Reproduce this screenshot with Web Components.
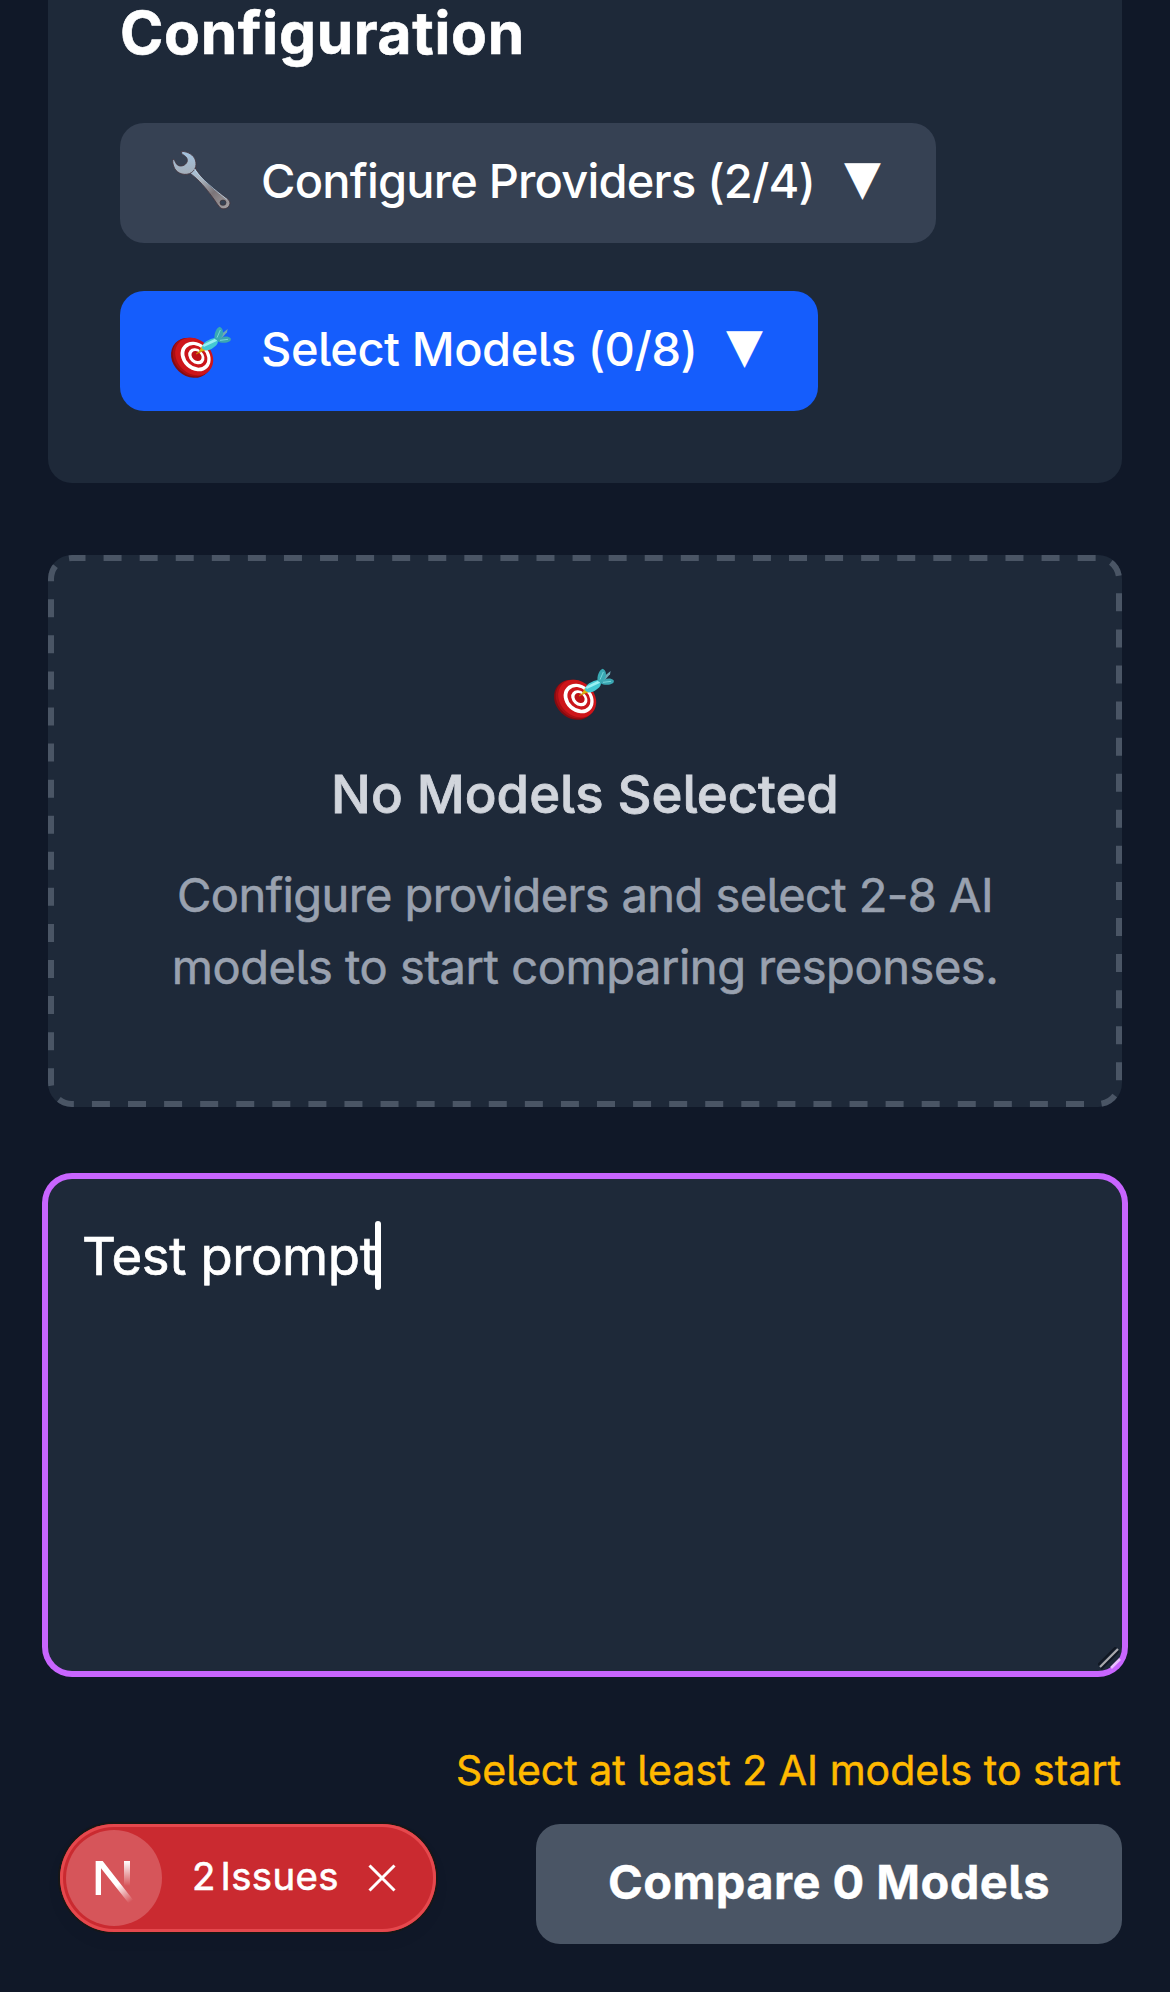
<!DOCTYPE html>
<html lang="en"><head><meta charset="utf-8"><title>Model comparison</title>
<style>
html,body{margin:0;height:1992px;overflow:hidden;background:#101828}
body{font-family:Inter,"Liberation Sans",sans-serif;font-feature-settings:"cv05";color:#fff}
</style></head><body>
<compare-app></compare-app>
<script>
const define=(name,html)=>customElements.define(name,class extends HTMLElement{
  constructor(){super();this.attachShadow({mode:'open'}).innerHTML=html;}
});

define('wrench-icon',`<style>:host{display:block;width:60px;height:60px}svg{display:block;overflow:visible}</style>
<svg width="60" height="60" viewBox="24 39 180 180">
<defs><linearGradient id="h" x1="0" y1="0" x2="1" y2="1"><stop offset="0" stop-color="#a9c6df"/><stop offset=".3" stop-color="#aab3bd"/><stop offset=".6" stop-color="#7b7478"/><stop offset="1" stop-color="#a8a4a6"/></linearGradient>
<linearGradient id="g" x1="0" y1="0" x2="0" y2="1"><stop offset="0" stop-color="#a3c3e0"/><stop offset="1" stop-color="#a4adb8"/></linearGradient></defs>
<g stroke="#45343c" stroke-width="2.5" stroke-linejoin="round"><path d="M88 98L105 83C122 112 143 133 163 148C180 161 198 172 207 181C216 193 202 210 186 206C177 203 170 188 157 171C139 146 117 119 88 98Z" fill="url(#h)"/>
<path d="M65 34C84 35 101 45 106 60C112 78 104 95 88 101C68 108 46 97 41 78C38 70 37 62 40 57C47 62 45 72 56 77C67 81 81 73 82 62C83 51 72 46 65 41Z" fill="url(#g)"/></g>
<path d="M103 87C125 119 165 150 202 179" stroke="#bfe0f5" stroke-width="3" fill="none" opacity=".75"/>
<ellipse cx="189" cy="188" rx="9" ry="8" fill="#364153" stroke="#3a2f35" stroke-width="2"/></svg>`);

define('target-icon',`<style>:host{display:block;width:60px;height:60px}svg{display:block;overflow:visible}</style>
<svg width="60" height="60" viewBox="24 33 180 180">
<g transform="rotate(43 97 140)"><ellipse cx="97" cy="145" rx="65" ry="55" fill="#850b10"/><ellipse cx="98" cy="141" rx="64" ry="53" fill="#a90e13"/><ellipse cx="101" cy="136" rx="62" ry="51" fill="#cd151a"/><ellipse cx="104" cy="133" rx="49" ry="40" fill="#fff"/><ellipse cx="104" cy="132" rx="38" ry="30" fill="#cb151b"/><ellipse cx="105" cy="131" rx="27" ry="21" fill="#fff"/><ellipse cx="105" cy="130" rx="17" ry="13" fill="#bd1116"/></g>
<path d="M108 132L131 114L133 121Z" fill="#e2b512" stroke="#c28a00" stroke-width="2"/><path d="M117 124L126 108L138 121Z" fill="#ddb411"/>
<path d="M166 87L203 57L201 67L183 87Z" fill="#6fa9b5"/>
<path d="M126 115C126 97 145 89 169 82C175 90 176 98 169 106C154 120 138 127 126 115Z" fill="#43c8d3"/>
<path d="M133 106L167 90" stroke="#98eff2" stroke-width="8" stroke-linecap="round"/>
<path d="M164 87C161 74 168 53 179 50C189 54 191 67 187 78L174 92Z" fill="#38a9b3"/><path d="M172 92C184 79 202 76 212 85C216 95 200 100 186 98C178 97 175 95 172 92Z" fill="#3ba6b2"/><path d="M171 83L181 60M180 91L204 88" stroke="#78d5da" stroke-width="3"/></svg>`);

define('menu-button',`<style>
:host{display:flex;align-items:center;height:120px;width:var(--w);box-sizing:border-box;padding:0 55px 0 48px;border-radius:24px;background:var(--bg,#364153);font-size:47px;font-weight:500;line-height:72px}
.l{padding-bottom:4px;margin-left:33px;white-space:nowrap;letter-spacing:var(--ls,0)}
.a{font:48px/72px "DejaVu Sans",sans-serif;margin-left:auto;padding-bottom:12px}
</style><slot name="icon"></slot><span class="l"><slot></slot></span><span class="a">▼</span>`);

define('config-panel',`<style>
:host{display:flex;flex-direction:column;align-items:flex-start;height:483px;box-sizing:border-box;padding:0 72px;border-radius:0 0 24px 24px;background:#1e2939}
h2{margin:-9px 0 48px;font-size:58.6px;line-height:84px;font-weight:700;letter-spacing:.7px;-webkit-text-stroke:.6px}
.s{height:48px}
</style><h2>Configuration</h2>
<menu-button style="--w:816px;--ls:-.8px"><wrench-icon slot="icon"></wrench-icon>Configure Providers (2/4)</menu-button><div class="s"></div>
<menu-button style="--w:698px;--bg:#155dfc;--ls:-.46px"><target-icon slot="icon"></target-icon>Select Models (0/8)</menu-button>`);

define('empty-state',`<style>
:host{display:flex;flex-direction:column;align-items:center;position:relative;height:552px;box-sizing:border-box;padding-top:108px;margin-top:72px;border-radius:24px;background:#1e2939;text-align:center}
.b{position:absolute;inset:0}
target-icon{margin-right:8px}
h3{margin:29px 0 0;font-size:52.7px;line-height:84px;font-weight:500;color:#d1d5dc;white-space:nowrap;letter-spacing:-.02px;-webkit-text-stroke:.8px}
p{margin:23px 0 0;font-size:47px;line-height:72px;color:#99a1af;white-space:nowrap;-webkit-text-stroke:.6px}
.p1{letter-spacing:-.57px}.p2{letter-spacing:-.44px}
</style><svg class="b" width="1074" height="552"><clipPath id="c"><rect width="1074" height="552" rx="24"/></clipPath><rect width="1074" height="552" rx="24" fill="none" stroke="#4a5565" stroke-width="12" stroke-dasharray="18 18.076" stroke-dashoffset="4.5" clip-path="url(#c)"/></svg>
<target-icon></target-icon><h3>No Models Selected</h3><p><span class="p1">Configure providers and select 2-8 AI</span><br><span class="p2">models to start comparing responses.</span></p>`);

define('prompt-box',`<style>
:host{display:flex;position:relative;height:492px;box-sizing:border-box;margin-top:72px;padding:36px 34px;border-radius:24px;background:#1e2939;box-shadow:0 0 0 6px #c865ff;align-items:flex-start;font-size:52.7px;line-height:81px}
.t{letter-spacing:-.4px;padding-top:1px;-webkit-text-stroke:.7px}
.c{width:6px;height:69px;border-radius:3px;background:#fff;margin:6px 0 0 -2px}
svg{position:absolute;right:0;bottom:0}
</style><span class="t">Test prompt</span><i class="c"></i>
<svg width="24" height="24" viewBox="0 0 24 24" fill="none"><path d="M0 18L18 0M3 22L21 4" stroke="#101722" stroke-width="2"/><path d="M2 20L20 2" stroke="#aaa9ad" stroke-width="2.2"/><path d="M13 21L22 12" stroke="#eac0ff" stroke-width="2.6"/></svg>`);

define('issues-badge',`<style>
:host{display:flex;align-items:center;width:376px;height:108px;box-sizing:border-box;padding-left:6px;border-radius:54px;background:#ca2a30;box-shadow:inset 0 0 0 3px #e5484d,0 0 0 2px #171717,0 8px 20px rgba(0,0,0,.03);font-size:38.4px;line-height:48px}
.o{width:96px;height:96px;border-radius:50%;background:#d6555a}
.t{padding-bottom:4px;white-space:nowrap;-webkit-text-stroke:.6px}.n{margin-left:30px}.w{margin-left:5px;letter-spacing:.4px}
svg{display:block}.x{margin-left:auto;margin-right:39px}
</style><div class="o"><svg width="96" height="96" viewBox="78 90 288 288"><defs>
<linearGradient id="a" gradientUnits="userSpaceOnUse" x1="235" y1="253" x2="272" y2="306"><stop stop-color="#fff"/><stop offset="1" stop-color="#fff" stop-opacity="0"/></linearGradient>
<linearGradient id="b" x1="0" y1="0" x2="0" y2="1"><stop stop-color="#fff"/><stop offset="1" stop-color="#fff" stop-opacity="0"/></linearGradient></defs>
<path d="M167 285V183H188L279 299L266 310L183 205V285Z" fill="url(#a)"/><rect x="252" y="183" width="18" height="75" fill="url(#b)"/></svg></div>
<span class="t n">2</span><span class="t w">Issues</span>
<svg class="x" width="30" height="30" viewBox="0 0 30 30"><path d="M2.5 2.5L27.5 27.5M27.5 2.5L2.5 27.5" stroke="#fff" stroke-width="3"/></svg>`);

define('action-bar',`<style>
:host{display:flex;justify-content:space-between;align-items:flex-end;margin-top:69px;padding-left:12px}
issues-badge{margin-bottom:12px}
.r{display:flex;flex-direction:column;align-items:flex-end}
.h{font-size:41px;line-height:60px;color:#ffb900;white-space:nowrap;margin:0 1px 24px 0;letter-spacing:.03px;-webkit-text-stroke:.5px}
.b{display:flex;align-items:center;justify-content:center;width:586px;height:120px;border-radius:24px;background:#4a5565;font-size:47px;font-weight:700;line-height:72px;letter-spacing:.44px;-webkit-text-stroke:.4px}
.b span{padding-bottom:4px;white-space:nowrap}
</style><issues-badge></issues-badge><div class="r"><span class="h">Select at least 2 AI models to start</span><div class="b"><span>Compare 0 Models</span></div></div>`);

define('compare-app',`<style>:host{display:block;padding:0 48px}</style>
<config-panel></config-panel><empty-state></empty-state><prompt-box></prompt-box><action-bar></action-bar>`);
</script></body></html>
